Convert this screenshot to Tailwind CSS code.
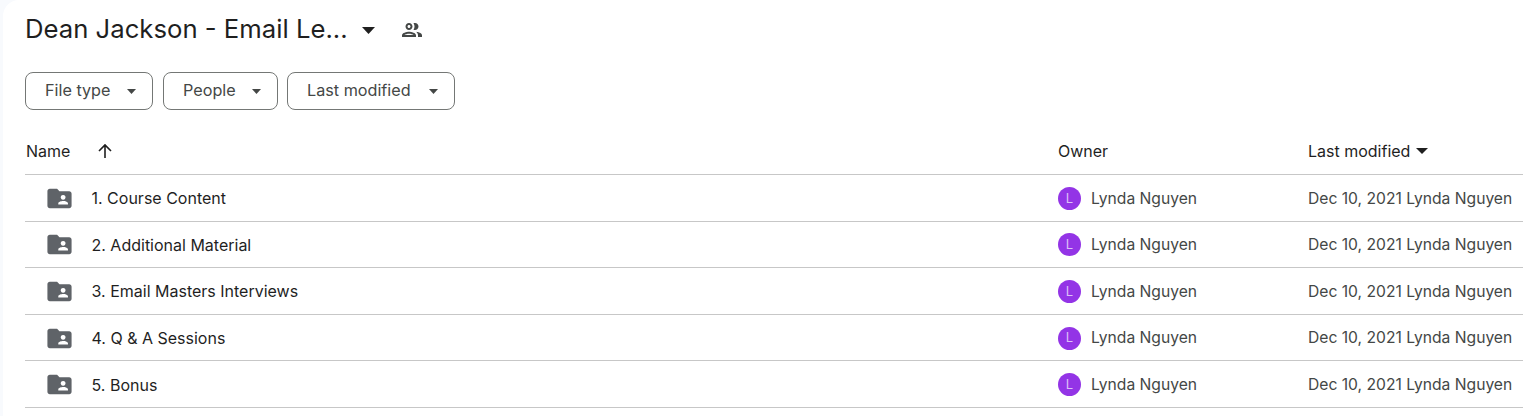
<!DOCTYPE html>
<html lang="en">
<head>
  <meta charset="UTF-8" />
  <title>Dean Jackson - Email Le...</title>
  <script src="https://cdn.jsdelivr.net/npm/@tailwindcss/browser@4"></script>
</head>
<body class="bg-[#f8fafd] h-[416px] overflow-hidden font-['Inter',sans-serif] text-[#1f1f1f]">
  <div class="h-[416px] ml-[3px] pl-[22px] bg-white rounded-tl-2xl overflow-hidden">
    <!-- Title -->
    <div class="flex items-center h-[60px]">
      <h1 class="text-[25.7px] w-[322px] pb-px whitespace-nowrap">Dean Jackson - Email Le...</h1>
      <svg class="ml-[15px]" width="13" height="7" viewBox="0 0 13 7"><path d="M0 0h13L6.5 7z" fill="#1f1f1f"/></svg>
      <svg class="ml-[25px]" width="24" height="24" viewBox="0 0 24 24" fill="#444746"><path d="M9 13.75c-2.34 0-7 1.17-7 3.5V19h14v-1.75c0-2.33-4.66-3.5-7-3.5zM4.34 17c.84-.58 2.87-1.25 4.66-1.25s3.82.67 4.66 1.25H4.34zM9 12c1.93 0 3.5-1.57 3.5-3.5S10.93 5 9 5 5.5 6.57 5.5 8.5 7.07 12 9 12zm0-5c.83 0 1.5.67 1.5 1.5S9.83 10 9 10s-1.5-.67-1.5-1.5S8.17 7 9 7zm7.04 6.81c1.16.84 1.96 1.96 1.96 3.44V19h4v-1.75c0-2.02-3.5-3.17-5.96-3.44zM15 12c1.93 0 3.5-1.57 3.5-3.5S16.93 5 15 5c-.54 0-1.04.13-1.5.35.63.89 1 1.98 1 3.15s-.37 2.26-1 3.15c.46.22.96.35 1.5.35z"/></svg>
    </div>

    <!-- Filters -->
    <div class="flex mt-[12px] text-[#444746] text-[16.2px]">
      <button class="flex items-center justify-between w-[128px] h-[38px] pl-[19px] pr-[16px] pb-[2px] border border-[#747775] rounded-lg">File type
        <svg class="mt-[2px]" width="9" height="5" viewBox="0 0 9 5"><path d="M0 0h9L4.5 5z" fill="#444746"/></svg>
      </button>
      <button class="flex items-center justify-between w-[115px] h-[38px] ml-[10px] pl-[19px] pr-[16px] pb-[2px] border border-[#747775] rounded-lg">People
        <svg class="mt-[2px]" width="9" height="5" viewBox="0 0 9 5"><path d="M0 0h9L4.5 5z" fill="#444746"/></svg>
      </button>
      <button class="flex items-center justify-between w-[168px] h-[38px] ml-[9px] pl-[19px] pr-[16px] pb-[2px] border border-[#747775] rounded-lg">Last modified
        <svg class="mt-[2px]" width="9" height="5" viewBox="0 0 9 5"><path d="M0 0h9L4.5 5z" fill="#444746"/></svg>
      </button>
    </div>

    <!-- Table header -->
    <div class="flex items-center h-[65px] pt-[18px] border-b border-[#c7c7c7] text-[16px]">
      <div class="flex flex-1 items-center pl-px">Name
        <svg class="ml-[27px]" width="16" height="16" viewBox="0 0 16 16"><path d="M8 15V2M2 8L8 2l6 6" fill="none" stroke="#1f1f1f" stroke-width="1.6"/></svg>
      </div>
      <div class="w-[250px]">Owner</div>
      <div class="w-[215px] flex items-center">Last modified
        <svg class="ml-[6px]" width="12" height="6" viewBox="0 0 12 6"><path d="M0 0h12L6 6z" fill="#1f1f1f"/></svg>
      </div>
    </div>

    <!-- Rows -->
    <div class="flex items-center h-[46.6px] pt-px border-b border-[#c7c7c7] text-[15.65px]">
      <div class="flex flex-1 items-center pl-[19.5px]">
        <svg width="29" height="29" viewBox="0 0 24 24" fill="#5f6368"><path d="M20 6h-8l-2-2H4c-1.1 0-2 .9-2 2v12c0 1.1.9 2 2 2h16c1.1 0 2-.9 2-2V8c0-1.1-.9-2-2-2zm-5 3a2 2 0 1 1-.01 0zM19 17h-8v-1c0-1.33 2.67-2 4-2s4 .67 4 2v1z"/></svg>
        <span class="ml-[18px] text-[16px]">1. Course Content</span>
      </div>
      <div class="w-[250px] flex items-center text-[#444746]">
        <span class="w-[23px] h-[23px] rounded-full bg-[#9334e6] text-white/70 text-[13px] flex items-center justify-center">L</span>
        <span class="ml-[10px]">Lynda Nguyen</span>
      </div>
      <div class="w-[215px] text-[#444746] whitespace-nowrap">Dec 10, 2021 Lynda Nguyen</div>
    </div>
    <div class="flex items-center h-[46.6px] pt-px border-b border-[#c7c7c7] text-[15.65px]">
      <div class="flex flex-1 items-center pl-[19.5px]">
        <svg width="29" height="29" viewBox="0 0 24 24" fill="#5f6368"><path d="M20 6h-8l-2-2H4c-1.1 0-2 .9-2 2v12c0 1.1.9 2 2 2h16c1.1 0 2-.9 2-2V8c0-1.1-.9-2-2-2zm-5 3a2 2 0 1 1-.01 0zM19 17h-8v-1c0-1.33 2.67-2 4-2s4 .67 4 2v1z"/></svg>
        <span class="ml-[18px] text-[16px]">2. Additional Material</span>
      </div>
      <div class="w-[250px] flex items-center text-[#444746]">
        <span class="w-[23px] h-[23px] rounded-full bg-[#9334e6] text-white/70 text-[13px] flex items-center justify-center">L</span>
        <span class="ml-[10px]">Lynda Nguyen</span>
      </div>
      <div class="w-[215px] text-[#444746] whitespace-nowrap">Dec 10, 2021 Lynda Nguyen</div>
    </div>
    <div class="flex items-center h-[46.6px] pt-px border-b border-[#c7c7c7] text-[15.65px]">
      <div class="flex flex-1 items-center pl-[19.5px]">
        <svg width="29" height="29" viewBox="0 0 24 24" fill="#5f6368"><path d="M20 6h-8l-2-2H4c-1.1 0-2 .9-2 2v12c0 1.1.9 2 2 2h16c1.1 0 2-.9 2-2V8c0-1.1-.9-2-2-2zm-5 3a2 2 0 1 1-.01 0zM19 17h-8v-1c0-1.33 2.67-2 4-2s4 .67 4 2v1z"/></svg>
        <span class="ml-[18px] text-[16px]">3. Email Masters Interviews</span>
      </div>
      <div class="w-[250px] flex items-center text-[#444746]">
        <span class="w-[23px] h-[23px] rounded-full bg-[#9334e6] text-white/70 text-[13px] flex items-center justify-center">L</span>
        <span class="ml-[10px]">Lynda Nguyen</span>
      </div>
      <div class="w-[215px] text-[#444746] whitespace-nowrap">Dec 10, 2021 Lynda Nguyen</div>
    </div>
    <div class="flex items-center h-[46.6px] pt-px border-b border-[#c7c7c7] text-[15.65px]">
      <div class="flex flex-1 items-center pl-[19.5px]">
        <svg width="29" height="29" viewBox="0 0 24 24" fill="#5f6368"><path d="M20 6h-8l-2-2H4c-1.1 0-2 .9-2 2v12c0 1.1.9 2 2 2h16c1.1 0 2-.9 2-2V8c0-1.1-.9-2-2-2zm-5 3a2 2 0 1 1-.01 0zM19 17h-8v-1c0-1.33 2.67-2 4-2s4 .67 4 2v1z"/></svg>
        <span class="ml-[18px] text-[16px]">4. Q &amp; A Sessions</span>
      </div>
      <div class="w-[250px] flex items-center text-[#444746]">
        <span class="w-[23px] h-[23px] rounded-full bg-[#9334e6] text-white/70 text-[13px] flex items-center justify-center">L</span>
        <span class="ml-[10px]">Lynda Nguyen</span>
      </div>
      <div class="w-[215px] text-[#444746] whitespace-nowrap">Dec 10, 2021 Lynda Nguyen</div>
    </div>
    <div class="flex items-center h-[46.6px] pt-px border-b border-[#c7c7c7] text-[15.65px]">
      <div class="flex flex-1 items-center pl-[19.5px]">
        <svg width="29" height="29" viewBox="0 0 24 24" fill="#5f6368"><path d="M20 6h-8l-2-2H4c-1.1 0-2 .9-2 2v12c0 1.1.9 2 2 2h16c1.1 0 2-.9 2-2V8c0-1.1-.9-2-2-2zm-5 3a2 2 0 1 1-.01 0zM19 17h-8v-1c0-1.33 2.67-2 4-2s4 .67 4 2v1z"/></svg>
        <span class="ml-[18px] text-[16px]">5. Bonus</span>
      </div>
      <div class="w-[250px] flex items-center text-[#444746]">
        <span class="w-[23px] h-[23px] rounded-full bg-[#9334e6] text-white/70 text-[13px] flex items-center justify-center">L</span>
        <span class="ml-[10px]">Lynda Nguyen</span>
      </div>
      <div class="w-[215px] text-[#444746] whitespace-nowrap">Dec 10, 2021 Lynda Nguyen</div>
    </div>
  </div>
</body>
</html>
